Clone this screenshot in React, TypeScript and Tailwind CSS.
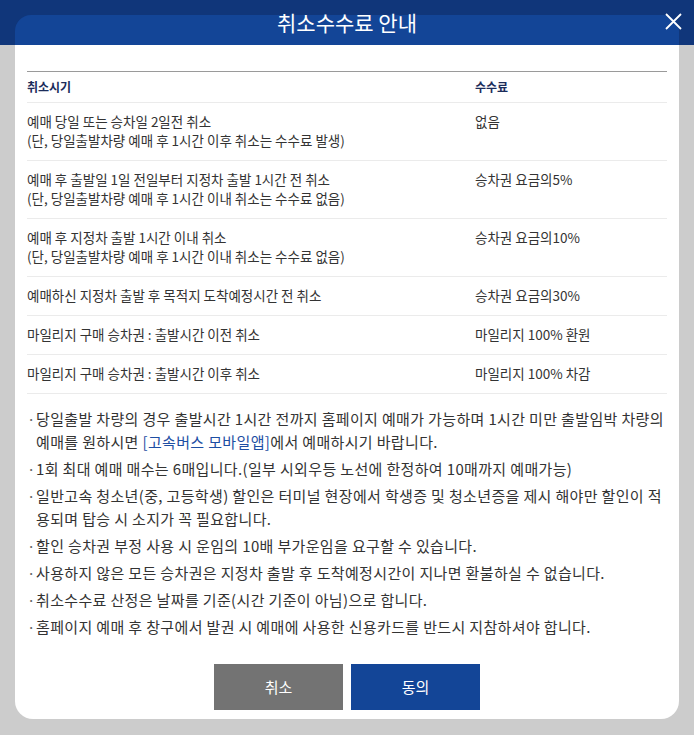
import React from 'react';

interface FeeRow {
  when: string[];
  fee: string;
}

const feeRows: FeeRow[] = [
  { when: ['예매 당일 또는 승차일 2일전 취소', '(단, 당일출발차량 예매 후 1시간 이후 취소는 수수료 발생)'], fee: '없음' },
  { when: ['예매 후 출발일 1일 전일부터 지정차 출발 1시간 전 취소', '(단, 당일출발차량 예매 후 1시간 이내 취소는 수수료 없음)'], fee: '승차권 요금의5%' },
  { when: ['예매 후 지정차 출발 1시간 이내 취소', '(단, 당일출발차량 예매 후 1시간 이내 취소는 수수료 없음)'], fee: '승차권 요금의10%' },
  { when: ['예매하신 지정차 출발 후 목적지 도착예정시간 전 취소'], fee: '승차권 요금의30%' },
  { when: ['마일리지 구매 승차권 : 출발시간 이전 취소'], fee: '마일리지 100% 환원' },
  { when: ['마일리지 구매 승차권 : 출발시간 이후 취소'], fee: '마일리지 100% 차감' },
];

const notes: React.ReactNode[] = [
  <>
    당일출발 차량의 경우 출발시간 1시간 전까지 홈페이지 예매가 가능하며 1시간 미만 출발임박 차량의 예매를 원하시면{' '}
    <span className="text-[#1d4ea3]">[고속버스 모바일앱]</span>에서 예매하시기 바랍니다.
  </>,
  '1회 최대 예매 매수는 6매입니다.(일부 시외우등 노선에 한정하여 10매까지 예매가능)',
  '일반고속 청소년(중, 고등학생) 할인은 터미널 현장에서 학생증 및 청소년증을 제시 해야만 할인이 적용되며 탑승 시 소지가 꼭 필요합니다.',
  '할인 승차권 부정 사용 시 운임의 10배 부가운임을 요구할 수 있습니다.',
  '사용하지 않은 모든 승차권은 지정차 출발 후 도착예정시간이 지나면 환불하실 수 없습니다.',
  '취소수수료 산정은 날짜를 기준(시간 기준이 아님)으로 합니다.',
  '홈페이지 예매 후 창구에서 발권 시 예매에 사용한 신용카드를 반드시 지참하셔야 합니다.',
];

const App: React.FC = () => {
  return (
    <div className="min-h-screen bg-[#cccccc] font-['Noto_Sans_CJK_KR','Noto_Sans',sans-serif]">
      {/* Header bar with modal title */}
      <div className="relative h-[45px] bg-[#10367a] pt-[15px] px-[15px]">
        <div className="h-[30px] w-[664px] rounded-t-[16px] bg-[#134597]" />
        <h2 className="absolute inset-x-0 top-0 flex h-[45px] items-center justify-center text-[21px] text-white">
          취소수수료 안내
        </h2>
        <button className="absolute right-[12px] top-[13px] flex h-[17px] w-[17px] items-center justify-center">
          <svg width="17" height="17" viewBox="0 0 17 17" fill="none" stroke="#ffffff" strokeWidth="1.8">
            <path d="M1 1L16 16M16 1L1 16" />
          </svg>
        </button>
      </div>

      {/* Modal body */}
      <div className="mx-[15px] w-[664px] rounded-b-[18px] bg-white px-[12px] pt-[26px] pb-[9px]">
        <table className="w-full border-collapse text-left">
          <thead>
            <tr className="border-t border-b border-t-[#9a9a9a] border-b-[#ebebeb]">
              <th className="w-[448px] py-[6px] text-[12px] leading-[18px] font-bold text-[#1b2c5a]">취소시기</th>
              <th className="py-[6px] text-[12px] leading-[18px] font-bold text-[#1b2c5a]">수수료</th>
            </tr>
          </thead>
          <tbody>
            {feeRows.map((row, i) => (
              <tr key={i} className="border-b border-[#ebebeb] align-top text-[13.5px] leading-[19px] text-[#333333]">
                <td className="pt-[9px] pb-[10px]">
                  {row.when.map((line, j) => (
                    <div key={j}>{line}</div>
                  ))}
                </td>
                <td className="pt-[9px] pb-[10px]">{row.fee}</td>
              </tr>
            ))}
          </tbody>
        </table>

        <ul className="mt-[13px] space-y-[4px] text-[15px] leading-[23px] tracking-[0.35px] text-[#333333]">
          {notes.map((note, i) => (
            <li key={i} className="flex">
              <span className="w-[9px] shrink-0 text-[#666666]">·</span>
              <p>{note}</p>
            </li>
          ))}
        </ul>

        <div className="mt-[26px] flex justify-center gap-[8px]">
          <button className="h-[46px] w-[129px] bg-[#737373] text-[15px] text-white">취소</button>
          <button className="h-[46px] w-[129px] bg-[#134597] text-[15px] text-white">동의</button>
        </div>
      </div>
    </div>
  );
};

export default App;
